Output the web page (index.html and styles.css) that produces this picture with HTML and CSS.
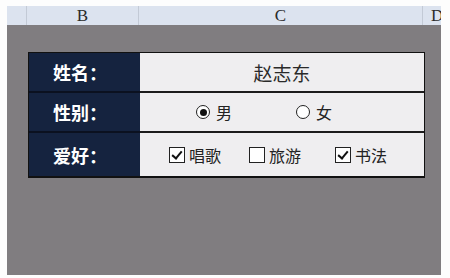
FILE: index.html
```html
<!DOCTYPE html>
<html lang="zh-CN">
<head>
    <meta charset="UTF-8">
    <title>员工信息</title>
    <link rel="stylesheet" href="styles.css">
</head>
<body>
    <div class="sheet">
        <div class="col-head">
            <div class="corner"></div>
            <div class="col">B</div>
            <div class="col">C</div>
            <div class="col col-d">D</div>
        </div>
        <div class="canvas">
            <div class="form-table">
                <div class="label">姓名：</div>
                <div class="value name">赵志东</div>

                <div class="label">性别：</div>
                <div class="value gender">
                    <span class="opt"><i class="radio on"></i>男</span>
                    <span class="opt"><i class="radio"></i>女</span>
                </div>

                <div class="label last">爱好：</div>
                <div class="value hobby last">
                    <span class="opt"><i class="check on"></i>唱歌</span>
                    <span class="opt"><i class="check"></i>旅游</span>
                    <span class="opt"><i class="check on"></i>书法</span>
                </div>
            </div>
        </div>
    </div>
</body>
</html>
```

FILE: styles.css
```css
body {
    margin: 0;
    background: #fdfdfd;
    font-family: "Noto Sans CJK SC", sans-serif;
}
.sheet {
    margin: 6px 0 0 7px;
    width: 434px;
    overflow: hidden;
}
.col-head {
    display: grid;
    grid-template-columns: 20px 112px 284px 30px;
    height: 19px;
    background: #dce3ef;
}
.col-head > div {
    border-right: 1px solid #c3cad6;
}
.col {
    font-family: "Liberation Serif", serif;
    font-size: 17px;
    line-height: 19px;
    text-align: center;
    color: #2a2a2a;
}
.col-d {
    text-align: left;
    padding-left: 8px;
}
.canvas {
    background: #807d80;
    height: 250px;
    padding: 27px 0 0 21px;
    box-sizing: border-box;
}
.form-table {
    display: grid;
    grid-template-columns: 111px 284px;
    grid-template-rows: 40px 40px 43px;
    width: 395px;
    border: 1px solid #111;
    border-bottom-width: 2px;
    background: #111;
}
.label {
    background: #15233f;
    color: #fff;
    font-weight: bold;
    font-size: 18px;
    display: flex;
    align-items: center;
    padding-left: 24px;
    border-bottom: 2px solid #0b1120;
}
.value {
    background: #efeef0;
    color: #222;
    display: flex;
    align-items: center;
    border-bottom: 2px solid #1c1c1c;
    font-size: 16px;
}
.last {
    border-bottom: none;
}
.name {
    justify-content: center;
    font-size: 19px;
    color: #2a2a2a;
}
.opt {
    display: flex;
    align-items: center;
    gap: 4px;
}
.gender {
    padding-left: 56px;
    gap: 64px;
}
.hobby {
    display: grid;
    grid-template-columns: 80px 86px auto;
    padding-left: 29px;
}
.radio {
    width: 12px;
    height: 12px;
    border: 1.5px solid #222;
    border-radius: 50%;
    position: relative;
    margin-right: 2px;
    background: #fff;
}
.radio.on::after {
    content: "";
    position: absolute;
    left: 2.5px;
    top: 2.5px;
    width: 7px;
    height: 7px;
    border-radius: 50%;
    background: #111;
}
.check {
    width: 14px;
    height: 14px;
    border: 1.5px solid #222;
    background: #fff;
    position: relative;
}
.check.on::after {
    content: "";
    position: absolute;
    left: 4px;
    top: 1px;
    width: 4px;
    height: 8px;
    border: solid #111;
    border-width: 0 2.5px 2.5px 0;
    transform: rotate(40deg);
}
```
